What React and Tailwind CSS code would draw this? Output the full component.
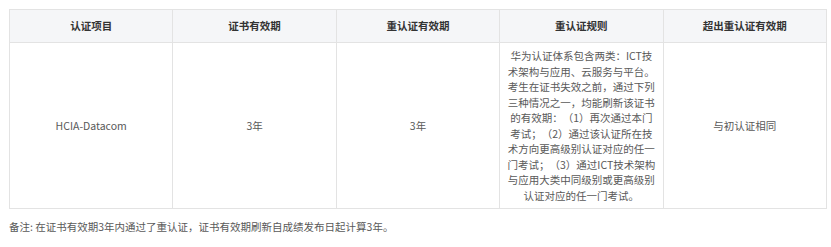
export default function App() {
  const font = { fontFamily: "'Noto Sans CJK SC', 'Noto Sans', sans-serif" };
  const headers = ['认证项目', '证书有效期', '重认证有效期', '重认证规则', '超出重认证有效期'];
  return (
    <div className="bg-white w-[831px] h-[247px] pt-[9px] pl-[9px] [text-spacing-trim:space-all]" style={font}>
      <table className="w-[818px] table-fixed border-collapse text-[10.5px] text-[#595959]">
        <thead>
          <tr className="bg-[#f5f6f8] h-[33px]">
            {headers.map((h) => (
              <th key={h} className="border border-[#e3e3e3] font-bold text-[#333] text-center">{h}</th>
            ))}
          </tr>
        </thead>
        <tbody>
          <tr>
            <td className="border border-[#e3e3e3] text-center">HCIA-Datacom</td>
            <td className="border border-[#e3e3e3] text-center">3年</td>
            <td className="border border-[#e3e3e3] text-center">3年</td>
            <td className="border border-[#e3e3e3] text-center px-[7px] py-[5px] leading-[15.5px]">
              华为认证体系包含两类：ICT技术架构与应用、云服务与平台。考生在证书失效之前，通过下列三种情况之一，均能刷新该证书的有效期：（1）再次通过本门考试；（2）通过该认证所在技术方向更高级别认证对应的任一门考试；（3）通过ICT技术架构与应用大类中同级别或更高级别认证对应的任一门考试。
            </td>
            <td className="border border-[#e3e3e3] text-center">与初认证相同</td>
          </tr>
        </tbody>
      </table>
      <p className="mt-[10px] text-[10.5px] text-[#595959] leading-[16px]">
        备注: 在证书有效期3年内通过了重认证，证书有效期刷新自成绩发布日起计算3年。
      </p>
    </div>
  );
}
